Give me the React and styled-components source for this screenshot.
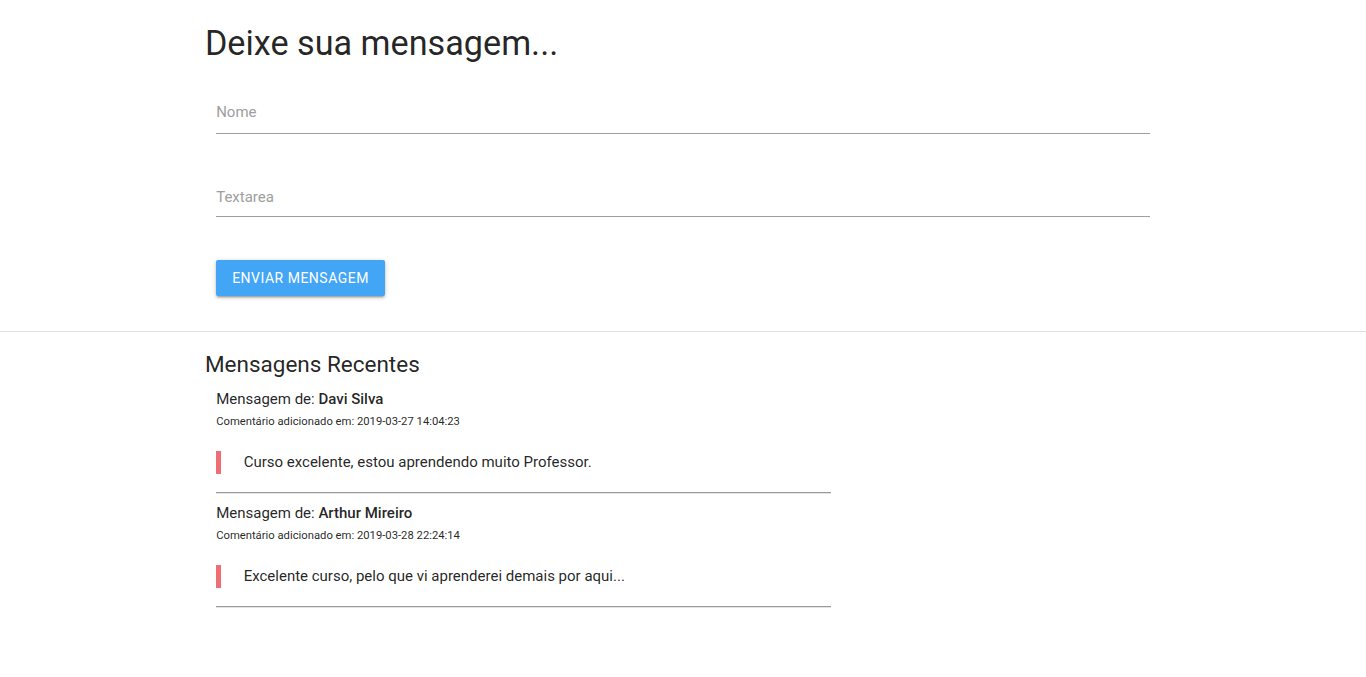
import React from "react";
import styled, { createGlobalStyle } from "styled-components";

const Global = createGlobalStyle`
  html, body { margin: 0; padding: 0; background: #fff; }
  body {
    font-family: Roboto, "Noto Sans", sans-serif;
    font-size: 15px;
    line-height: 1.5;
    color: rgba(0,0,0,0.87);
  }
  * { box-sizing: border-box; }
`;

const Container = styled.div`
  width: 70%;
  margin: 0 auto;
`;

const Title = styled.h4`
  margin: 25px 0 0;
  font-size: 34.2px;
  line-height: 110%;
  font-weight: 400;
`;

const Form = styled.form`
  display: flex;
  flex-direction: column;
  padding: 0 11.25px;
  margin-top: 26px;
`;

const Field = styled.div`
  position: relative;
  margin-top: ${p => p.$mt || 0}px;
`;

const Input = styled.div`
  height: 45px;
  border-bottom: 1px solid #9e9e9e;
`;

const Label = styled.label`
  position: absolute;
  left: 0;
  top: ${p => p.$top || 12}px;
  font-size: 15px;
  line-height: 1.5;
  color: #9e9e9e;
`;

const Button = styled.button`
  align-self: flex-start;
  margin-top: 43px;
  height: 36px;
  line-height: 36px;
  padding: 0 16px;
  border: none;
  border-radius: 2px;
  background: #42a5f5;
  color: #fff;
  font-family: Roboto, sans-serif;
  font-size: 14px;
  letter-spacing: 0.5px;
  text-transform: uppercase;
  box-shadow: 0 2px 2px 0 rgba(0,0,0,0.14), 0 3px 1px -2px rgba(0,0,0,0.12), 0 1px 5px 0 rgba(0,0,0,0.2);
  cursor: pointer;
`;

const Divider = styled.div`
  height: 1px;
  background: #e0e0e0;
  margin-top: 35px;
`;

const SubTitle = styled.h5`
  margin: 20px 0 0;
  font-size: 22.5px;
  line-height: 110%;
  font-weight: 400;
`;

const List = styled.div`
  width: 66.6667%;
  padding: 0 11.25px;
  margin-top: 12px;
`;

const Item = styled.div`
  & + & { margin-top: 8.5px; }
`;

const Author = styled.div`
  font-size: 15px;
  line-height: 22.5px;
  b { font-weight: 500; }
`;

const DateLine = styled.div`
  margin-top: 3.5px;
  font-size: 11.25px;
  line-height: 16.875px;
`;

const Quote = styled.blockquote`
  margin: 20px 0 18px;
  padding-left: 22.5px;
  border-left: 5px solid #ee6e73;
  font-size: 15px;
  line-height: 22.5px;
`;

const Rule = styled.hr`
  margin: 0;
  height: 0;
  border: none;
  border-top: 1px solid #9a9a9a;
  border-bottom: 1px solid #e4e4e4;
`;

const messages = [
  { name: "Davi Silva", date: "2019-03-27 14:04:23", text: "Curso excelente, estou aprendendo muito Professor." },
  { name: "Arthur Mireiro", date: "2019-03-28 22:24:14", text: "Excelente curso, pelo que vi aprenderei demais por aqui..." },
];

export default function App() {
  return (
    <>
      <Global />
      <Container>
        <Title>Deixe sua mensagem...</Title>
        <Form onSubmit={e => e.preventDefault()}>
          <Field>
            <Input />
            <Label>Nome</Label>
          </Field>
          <Field $mt={38}>
            <Input />
            <Label $top={14}>Textarea</Label>
          </Field>
          <Button type="submit">Enviar mensagem</Button>
        </Form>
      </Container>
      <Divider />
      <Container>
        <SubTitle>Mensagens Recentes</SubTitle>
        <List>
          {messages.map(m => (
            <Item key={m.name}>
              <Author>Mensagem de: <b>{m.name}</b></Author>
              <DateLine>Comentário adicionado em: {m.date}</DateLine>
              <Quote>{m.text}</Quote>
              <Rule />
            </Item>
          ))}
        </List>
      </Container>
    </>
  );
}
